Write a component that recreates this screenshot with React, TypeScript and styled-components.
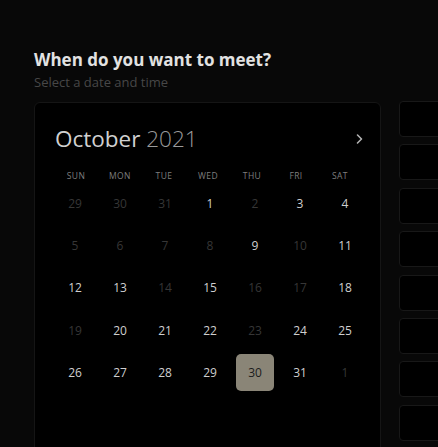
import React from "react";
import styled, { createGlobalStyle } from "styled-components";

const Global = createGlobalStyle`
  html, body { margin: 0; padding: 0; background: #080808; overflow: hidden; }
  body { font-family: "Open Sans", "Liberation Sans", sans-serif; }
  * { box-sizing: border-box; }
`;

const Page = styled.div`
  width: 438px;
  height: 447px;
  padding: 49px 0 0 34px;
  overflow: hidden;
`;

const Title = styled.h1`
  margin: 0;
  font-size: 17px;
  font-weight: 700;
  line-height: 22px;
  color: #e2e2e2;
`;

const Subtitle = styled.p`
  margin: 3px 0 0;
  font-size: 13px;
  line-height: 16px;
  color: #474747;
`;

const Main = styled.div`
  display: flex;
  gap: 18px;
  margin-top: 12px;
  align-items: flex-start;
`;

const Card = styled.section`
  flex: none;
  width: 347px;
  height: 400px;
  background: #000;
  border: 1px solid #151515;
  border-radius: 6px;
  padding: 20px 12px 0 18px;
`;

const Header = styled.div`
  display: flex;
  align-items: center;
  justify-content: space-between;
  height: 32px;
  padding: 0 0 0 2px;
`;

const Month = styled.h2`
  margin: 0;
  font-size: 22.5px;
  font-weight: 400;
  line-height: 32px;
  color: #d0d0d0;
  span { font-weight: 300; color: #9a9a9a; }
`;

const NavButton = styled.button`
  background: none;
  border: none;
  padding: 0;
  margin-right: 3px;
  width: 12px;
  height: 16px;
  display: flex;
  align-items: center;
  justify-content: center;
  color: #b8b8b8;
`;

const WeekHeader = styled.div`
  display: grid;
  grid-template-columns: repeat(7, 44px);
  height: 14px;
  margin: 13px 0 0 1px;
`;

const WeekDay = styled.div`
  display: flex;
  align-items: center;
  justify-content: center;
  font-size: 8.5px;
  letter-spacing: 0.4px;
  color: #7e7e7e;
`;

const DayGrid = styled.div`
  display: grid;
  grid-template-columns: repeat(7, 45px);
  grid-auto-rows: 42.3px;
  margin-left: -0.5px;
`;

const Day = styled.div<{ $tone: "on" | "off" | "sel" }>`
  display: flex;
  align-items: center;
  justify-content: center;
  width: 38px;
  height: 37px;
  justify-self: center;
  align-self: center;
  border-radius: 5px;
  font-size: 12px;
  color: ${(p) => (p.$tone === "on" ? "#cfcfcf" : p.$tone === "sel" ? "#1c1c1c" : "#363636")};
  background: ${(p) => (p.$tone === "sel" ? "#8a8577" : "transparent")};
`;

const Slots = styled.div`
  display: flex;
  flex-direction: column;
  gap: 7.4px;
  margin-top: -1px;
`;

const Slot = styled.div`
  width: 120px;
  height: 36px;
  background: #000;
  border: 1px solid #181818;
  border-radius: 4px;
`;

const weekdays = ["SUN", "MON", "TUE", "WED", "THU", "FRI", "SAT"];

type Tone = "on" | "off" | "sel";
const days: [string, Tone][] = [
  ["29", "off"], ["30", "off"], ["31", "off"], ["1", "on"], ["2", "off"], ["3", "on"], ["4", "on"],
  ["5", "off"], ["6", "off"], ["7", "off"], ["8", "off"], ["9", "on"], ["10", "off"], ["11", "on"],
  ["12", "on"], ["13", "on"], ["14", "off"], ["15", "on"], ["16", "off"], ["17", "off"], ["18", "on"],
  ["19", "off"], ["20", "on"], ["21", "on"], ["22", "on"], ["23", "off"], ["24", "on"], ["25", "on"],
  ["26", "on"], ["27", "on"], ["28", "on"], ["29", "on"], ["30", "sel"], ["31", "on"], ["1", "off"],
];

export default function App() {
  return (
    <>
      <Global />
      <Page>
        <Title>When do you want to meet?</Title>
        <Subtitle>Select a date and time</Subtitle>
        <Main>
          <Card>
            <Header>
              <Month>
                October <span>2021</span>
              </Month>
              <NavButton aria-label="Next month">
                <svg width="7" height="10" viewBox="0 0 7 10" fill="none">
                  <path d="M1.5 1l4 4-4 4" stroke="currentColor" strokeWidth="1.5" strokeLinecap="round" strokeLinejoin="round" />
                </svg>
              </NavButton>
            </Header>
            <WeekHeader>
              {weekdays.map((d) => (
                <WeekDay key={d}>{d}</WeekDay>
              ))}
            </WeekHeader>
            <DayGrid>
              {days.map(([n, t], i) => (
                <Day key={i} $tone={t}>
                  {n}
                </Day>
              ))}
            </DayGrid>
          </Card>
          <Slots>
            {Array.from({ length: 8 }).map((_, i) => (
              <Slot key={i} />
            ))}
          </Slots>
        </Main>
      </Page>
    </>
  );
}
